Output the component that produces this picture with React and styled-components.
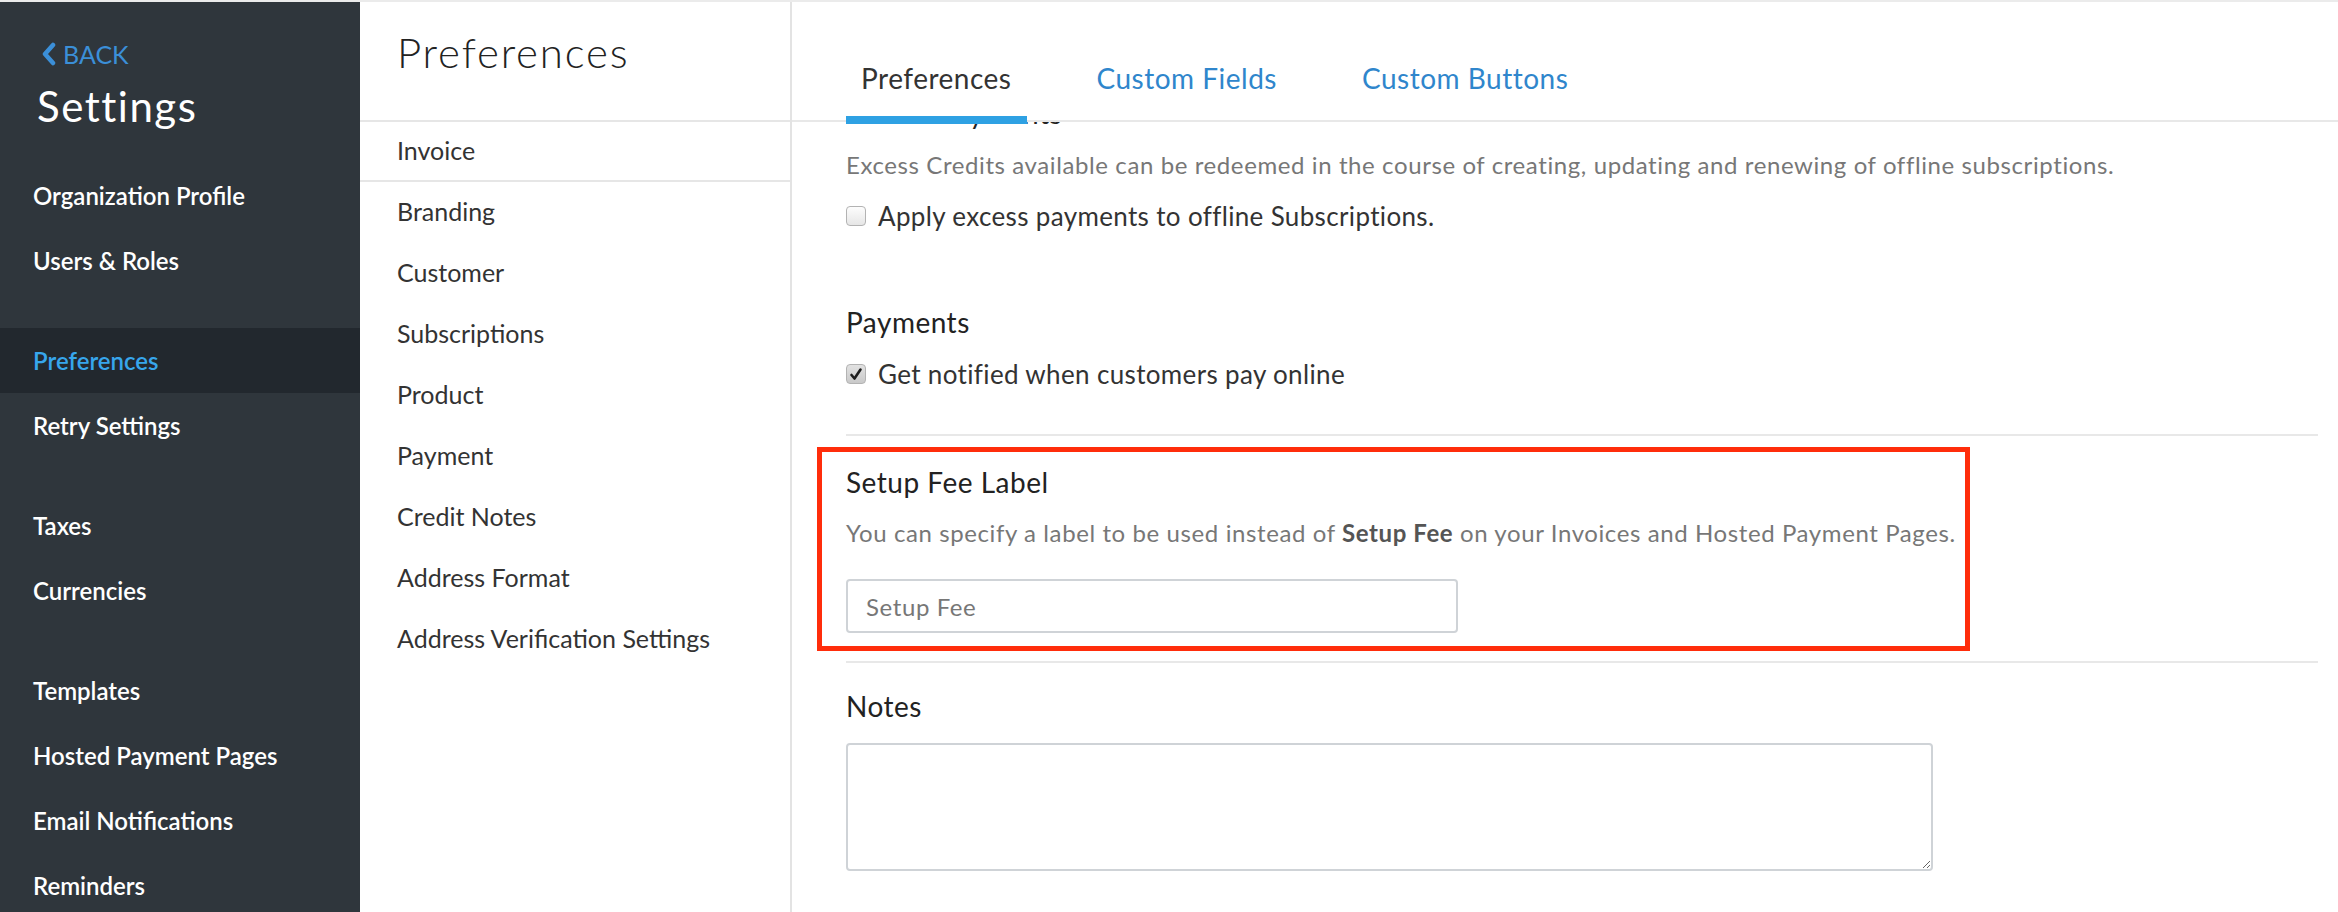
import React from "react";
import styled, { createGlobalStyle } from "styled-components";

const GlobalStyle = createGlobalStyle`
  html, body {
    margin: 0;
    padding: 0;
  }
  body {
    font-family: Lato, "Open Sans", sans-serif;
    background: #fff;
    color: #333;
  }
  * {
    box-sizing: border-box;
  }
`;

const Page = styled.div`
  display: flex;
  height: 912px;
  border-top: 2px solid #ebebeb;
  overflow: hidden;
`;

/* ---------- left settings sidebar ---------- */

const Sidebar = styled.aside`
  width: 360px;
  flex-shrink: 0;
  background: #2f363c;
  padding-top: 37px;
  display: flex;
  flex-direction: column;
`;

const SidebarHead = styled.div`
  padding-left: 37px;
  margin-bottom: 32px;
`;

const BackLink = styled.a`
  display: flex;
  align-items: center;
  gap: 7px;
  height: 30px;
  padding-left: 4px;
  color: #3b8fd8;
  font-size: 25px;
  line-height: 30px;
  text-decoration: none;
`;

const SidebarTitle = styled.h1`
  margin: 12px 0 0;
  font-size: 42px;
  line-height: 50px;
  font-weight: 400;
  letter-spacing: 1.5px;
  color: #fff;
`;

const NavGroup = styled.div`
  display: flex;
  flex-direction: column;
  margin-bottom: 35px;
`;

const NavItem = styled.div`
  height: 65px;
  padding-left: 33px;
  display: flex;
  align-items: center;
  font-size: 24px;
  font-weight: 600;
  color: ${(p) => (p.$active ? "#37a6ec" : "#fff")};
  background: ${(p) => (p.$active ? "#22282e" : "transparent")};
`;

/* ---------- preferences sub navigation ---------- */

const SubNav = styled.nav`
  width: 432px;
  flex-shrink: 0;
  border-right: 2px solid #e3e3e3;
  display: flex;
  flex-direction: column;
`;

const SubNavHead = styled.div`
  height: 120px;
  padding: 25px 0 0 37px;
  border-bottom: 2px solid #e6e6e6;
`;

const SubNavTitle = styled.h2`
  margin: 0;
  font-size: 42px;
  line-height: 50px;
  font-weight: 300;
  letter-spacing: 1.8px;
  color: #222;
`;

const SubNavItem = styled.div`
  height: ${(p) => (p.$active ? "60px" : "61px")};
  padding: 0 0 3px 37px;
  display: flex;
  align-items: center;
  font-size: 25px;
  color: #333;
  border-bottom: ${(p) => (p.$active ? "2px solid #e6e6e6" : "none")};
`;

/* ---------- main panel ---------- */

const Main = styled.main`
  flex: 1;
  min-width: 0;
  display: flex;
  flex-direction: column;
`;

const TabBar = styled.div`
  position: relative;
  z-index: 1;
  height: 120px;
  flex-shrink: 0;
  display: flex;
  align-items: flex-end;
  gap: 55px;
  padding-left: 54px;
  border-bottom: 2px solid #e8e8e8;
`;

const Tab = styled.div`
  padding: 0 15px 23px;
  margin-bottom: -4px;
  font-size: 28px;
  line-height: 30px;
  letter-spacing: 0.5px;
  color: ${(p) => (p.$active ? "#333" : "#2f86cc")};
  border-bottom: 8px solid ${(p) => (p.$active ? "#2ea1e3" : "transparent")};
  white-space: nowrap;
`;

const ScrollArea = styled.div`
  flex: 1;
  min-height: 0;
  overflow: hidden;
`;

const Content = styled.div`
  margin-top: -24px;
  padding: 0 20px 0 54px;
  display: flex;
  flex-direction: column;
  align-items: flex-start;
`;

const SectionTitle = styled.div`
  margin-top: ${(p) => p.$gap || 0}px;
  font-size: 28px;
  line-height: 30px;
  letter-spacing: 0.5px;
  color: #222;
  white-space: nowrap;
`;

const Hint = styled.div`
  margin-top: ${(p) => p.$gap || 0}px;
  font-size: 24px;
  line-height: 30px;
  letter-spacing: 0.6px;
  color: #777;
  white-space: nowrap;

  b {
    color: #555;
    font-weight: 700;
  }
`;

const CheckRow = styled.label`
  margin-top: ${(p) => p.$gap || 0}px;
  height: 30px;
  display: flex;
  align-items: center;
  gap: 12px;
  font-size: 26px;
  letter-spacing: 0.35px;
  color: #333;
  white-space: nowrap;
`;

const Box = styled.span`
  width: 20px;
  height: 20px;
  flex-shrink: 0;
  border-radius: 4px;
  border: 1px solid #b3b3b3;
  background: ${(p) =>
    p.$checked
      ? "linear-gradient(#e2e2e2, #c9c9c9)"
      : "linear-gradient(#fdfdfd, #e6e6e6)"};
  display: inline-flex;
  align-items: center;
  justify-content: center;
`;

const Divider = styled.div`
  align-self: stretch;
  height: 2px;
  margin-top: ${(p) => p.$gap || 0}px;
  background: #e8e8e8;
`;

const Highlight = styled.section`
  margin: 11px 0 0 -29px;
  width: 1153px;
  border: 5px solid #ff2d0b;
  padding: 15px 0 13px 24px;
  display: flex;
  flex-direction: column;
  align-items: flex-start;
`;

const TextInput = styled.input`
  margin-top: 31px;
  width: 612px;
  height: 54px;
  padding: 0 18px;
  border: 2px solid #cfd3d7;
  border-radius: 4px;
  font-family: inherit;
  font-size: 24px;
  letter-spacing: 0.6px;
  color: #777;
  outline: none;
`;

const NotesArea = styled.textarea`
  margin-top: 22px;
  width: 1087px;
  height: 128px;
  border: 2px solid #cfd3d7;
  border-radius: 4px;
  font-family: inherit;
  font-size: 23px;
  outline: none;
`;

function Checkbox({ checked }) {
  return (
    <Box $checked={checked}>
      {checked && (
        <svg width="14" height="14" viewBox="0 0 14 14">
          <path d="M2.5 8 L5.5 11.5 L11.5 2.5" fill="none" stroke="#1e1e1e" strokeWidth="2.6" strokeLinecap="round" strokeLinejoin="round" />
        </svg>
      )}
    </Box>
  );
}

const navGroups = [
  ["Organization Profile", "Users & Roles"],
  ["Preferences", "Retry Settings"],
  ["Taxes", "Currencies"],
  ["Templates", "Hosted Payment Pages", "Email Notifications", "Reminders"],
];

const subItems = [
  "Invoice",
  "Branding",
  "Customer",
  "Subscriptions",
  "Product",
  "Payment",
  "Credit Notes",
  "Address Format",
  "Address Verification Settings",
];

export default function App() {
  return (
    <>
      <GlobalStyle />
      <Page>
        <Sidebar>
          <SidebarHead>
            <BackLink href="#">
              <svg width="15" height="24" viewBox="0 0 15 24">
                <path d="M12 3 L4 12 L12 21" fill="none" stroke="#3b8fd8" strokeWidth="4.5" strokeLinecap="round" strokeLinejoin="round" />
              </svg>
              BACK
            </BackLink>
            <SidebarTitle>Settings</SidebarTitle>
          </SidebarHead>
          {navGroups.map((group, i) => (
            <NavGroup key={i}>
              {group.map((item) => (
                <NavItem key={item} $active={item === "Preferences"}>
                  {item}
                </NavItem>
              ))}
            </NavGroup>
          ))}
        </Sidebar>

        <SubNav>
          <SubNavHead>
            <SubNavTitle>Preferences</SubNavTitle>
          </SubNavHead>
          {subItems.map((item) => (
            <SubNavItem key={item} $active={item === "Invoice"}>
              {item}
            </SubNavItem>
          ))}
        </SubNav>

        <Main>
          <TabBar>
            <Tab $active>Preferences</Tab>
            <Tab>Custom Fields</Tab>
            <Tab>Custom Buttons</Tab>
          </TabBar>
          <ScrollArea>
            <Content>
              <SectionTitle>Excess Payments</SectionTitle>
              <Hint $gap={22}>
                Excess Credits available can be redeemed in the course of creating, updating and renewing of offline subscriptions.
              </Hint>
              <CheckRow $gap={21}>
                <Checkbox />
                Apply excess payments to offline Subscriptions.
              </CheckRow>

              <SectionTitle $gap={76}>Payments</SectionTitle>
              <CheckRow $gap={22}>
                <Checkbox checked />
                Get notified when customers pay online
              </CheckRow>

              <Divider $gap={45} />
              <Highlight>
                <SectionTitle>Setup Fee Label</SectionTitle>
                <Hint $gap={21}>
                  You can specify a label to be used instead of <b>Setup Fee</b> on your Invoices and Hosted Payment Pages.
                </Hint>
                <TextInput defaultValue="Setup Fee" />
              </Highlight>
              <Divider $gap={10} />

              <SectionTitle $gap={28}>Notes</SectionTitle>
              <NotesArea />
            </Content>
          </ScrollArea>
        </Main>
      </Page>
    </>
  );
}
